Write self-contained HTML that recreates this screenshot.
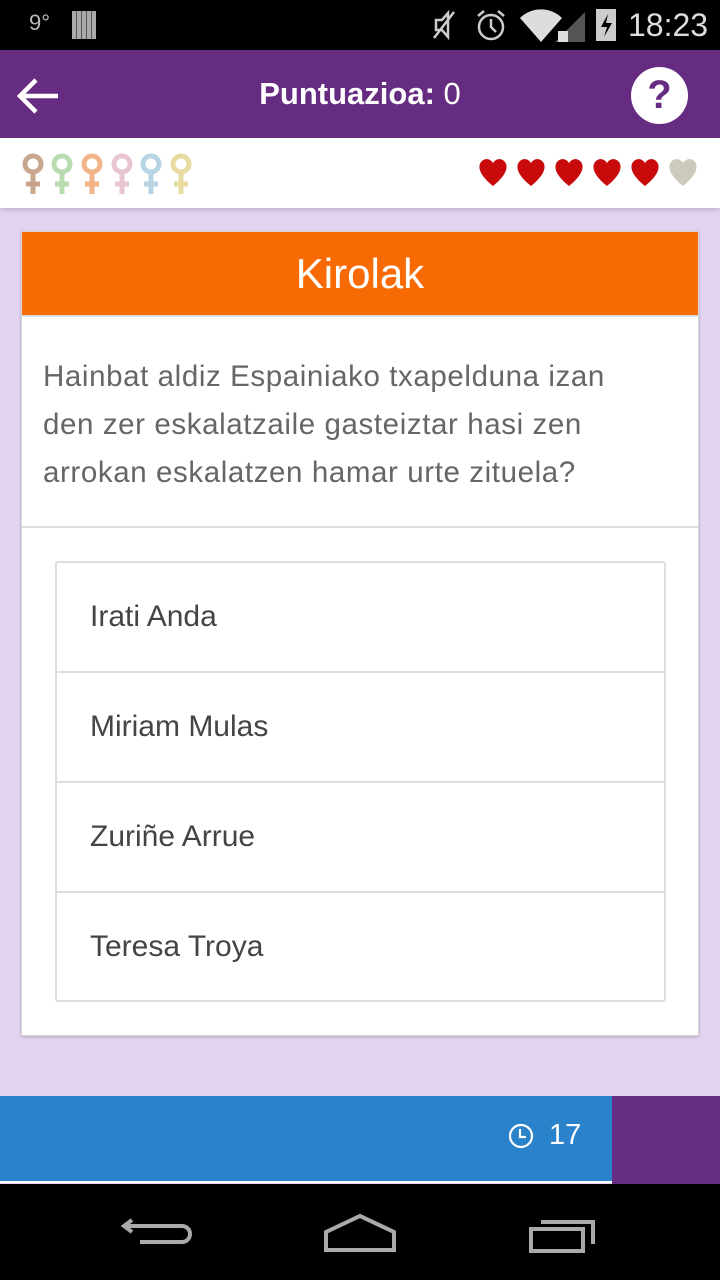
<!DOCTYPE html>
<html><head><meta charset="utf-8"><style>
*{margin:0;padding:0;box-sizing:border-box}
body{width:720px;height:1280px;overflow:hidden;font-family:"Liberation Sans",sans-serif;background:#e2d3f0;position:relative}
.sb{position:absolute;top:0;left:0;width:720px;height:50px;background:#000;color:#ddd}
.ab{position:absolute;top:50px;left:0;width:720px;height:88px;background:#662c81}
.row{position:absolute;top:138px;left:0;width:720px;height:70px;background:#fff;box-shadow:0 2px 4px rgba(0,0,0,.15)}
.card{position:absolute;left:21px;top:231px;width:678px;height:805px;background:#fff;border:1px solid #d5d5d5;box-shadow:0 1px 3px rgba(0,0,0,.2)}
.hd{height:85px;background:#f86a03;color:#fff;font-size:42px;text-align:center;line-height:84px;border-bottom:2px solid #ddd}
.q{padding:36px 0 0 21px;height:211px;color:#666;font-size:29.5px;letter-spacing:.6px;line-height:48px;white-space:nowrap;border-bottom:2px solid #ddd}
.ans{position:absolute;left:33px;top:329px;width:611px;height:441px;border:2px solid #ddd;border-radius:3px}
.ans div{height:110px;line-height:108px;padding-left:33px;font-size:30px;color:#444;border-bottom:2px solid #ddd}
.ans div:last-child{border-bottom:none}
.bb{position:absolute;top:1096px;left:0;width:612px;height:87px;background:#2a83ca;border-bottom:2px solid #fff}
.bp{position:absolute;top:1096px;left:612px;width:108px;height:88px;background:#662c81}
.nav{position:absolute;top:1184px;left:0;width:720px;height:96px;background:#000}
</style></head><body>
<div class="sb">
<span style="position:absolute;left:29px;top:10px;font-size:22px;color:#bbb">9°</span>
<div style="position:absolute;left:72px;top:11px;width:24px;height:28px;background:repeating-linear-gradient(90deg,#aaa 0 4px,#555 4px 5px)"></div>
<svg style="position:absolute;left:430px;top:8px" width="28" height="34"><path d="M6 12h6l6-7v24l-6-7H6z" fill="none" stroke="#ccc" stroke-width="2.5"/><path d="M4 30L24 4" stroke="#ccc" stroke-width="2.5"/></svg>
<svg style="position:absolute;left:474px;top:8px" width="34" height="34"><circle cx="17" cy="19" r="12" fill="none" stroke="#ccc" stroke-width="2.5"/><path d="M17 11v8l5 5M4 8l6-5M30 8l-6-5" stroke="#ccc" stroke-width="2.5" fill="none"/></svg>
<svg style="position:absolute;left:518px;top:8px" width="68" height="34"><path d="M2 10a30 30 0 0 1 42 0L23 34z" fill="#ddd"/><path d="M37 34h30V4z" fill="#555"/><path d="M40 34h10V23h-10z" fill="#ddd"/></svg>
<div style="position:absolute;left:596px;top:9px;width:20px;height:32px;background:#ccc"><svg width="20" height="32"><path d="M12 5L5 18h6l-3 10 8-14h-6z" fill="#000"/></svg></div>
<span style="position:absolute;left:628px;top:7px;font-size:32px;color:#ddd">18:23</span>
</div>
<div class="ab">
<svg style="position:absolute;left:14px;top:26px" width="48" height="40"><path d="M44 20H6M22 4L6 20l16 16" fill="none" stroke="#fff" stroke-width="4.5"/></svg>
<div style="position:absolute;left:0;width:720px;top:26px;text-align:center;color:#fff;font-size:31px"><b>Puntuazioa:</b> 0</div>
<div style="position:absolute;left:631px;top:17px;width:57px;height:57px;border-radius:50%;background:#fff;color:#662c81;font-size:40px;font-weight:bold;text-align:center;line-height:57px">?</div>
</div>
<div class="row">
<svg style="position:absolute;left:16px;top:12px" width="182" height="56">
<g stroke-width="5" fill="none">
<g stroke="#c9a78f"><circle cx="17" cy="14" r="8"/><path d="M17 22v22M10 34h14"/></g>
<g stroke="#b8dcb0"><circle cx="46" cy="14" r="8"/><path d="M46 22v22M39 34h14"/></g>
<g stroke="#f2b58a"><circle cx="76" cy="14" r="8"/><path d="M76 22v22M69 34h14"/></g>
<g stroke="#e9c5d3"><circle cx="106" cy="14" r="8"/><path d="M106 22v22M99 34h14"/></g>
<g stroke="#b8d4e4"><circle cx="135" cy="14" r="8"/><path d="M135 22v22M128 34h14"/></g>
<g stroke="#e8dba0"><circle cx="165" cy="14" r="8"/><path d="M165 22v22M158 34h14"/></g>
</g></svg>
<svg style="position:absolute;left:476px;top:18px" width="226" height="36">
<defs><path id="h" d="M15 30C0 18 0 10 3 6c3-4 9-4 12 1 3-5 9-5 12-1 3 4 3 12-12 24z"/></defs>
<use href="#h" x="2" fill="#c80a0a"/><use href="#h" x="40" fill="#c80a0a"/><use href="#h" x="78" fill="#c80a0a"/><use href="#h" x="116" fill="#c80a0a"/><use href="#h" x="154" fill="#c80a0a"/><use href="#h" x="192" fill="#cdc9bd"/>
</svg>
</div>
<div class="card">
<div class="hd">Kirolak</div>
<div class="q">Hainbat aldiz Espainiako txapelduna izan<br>den zer eskalatzaile gasteiztar hasi zen<br>arrokan eskalatzen hamar urte zituela?</div>
<div class="ans"><div>Irati Anda</div><div>Miriam Mulas</div><div>Zuriñe Arrue</div><div>Teresa Troya</div></div>
</div>
<div class="bb">
<svg style="position:absolute;left:507px;top:26px" width="28" height="28"><circle cx="14" cy="14" r="11" fill="none" stroke="#fff" stroke-width="2.2"/><path d="M13 7v8h6" stroke="#fff" stroke-width="2.2" fill="none"/></svg>
<span style="position:absolute;left:549px;top:23px;color:#fff;font-size:29px">17</span>
</div>
<div class="bp"></div>
<div class="nav">
<svg style="position:absolute;left:120px;top:28px" width="80" height="44"><path d="M12 8L4 14l8 6M4 14h58a8 8 0 0 1 0 16H20" fill="none" stroke="#aaa" stroke-width="4"/></svg>
<svg style="position:absolute;left:320px;top:28px" width="80" height="44"><path d="M6 38V20L40 4l34 16v18z" fill="none" stroke="#aaa" stroke-width="4"/></svg>
<svg style="position:absolute;left:525px;top:30px" width="76" height="44"><path d="M6 15h52v22H6z M16 8h52v22" fill="none" stroke="#aaa" stroke-width="4"/></svg>
</div>
</body></html>
